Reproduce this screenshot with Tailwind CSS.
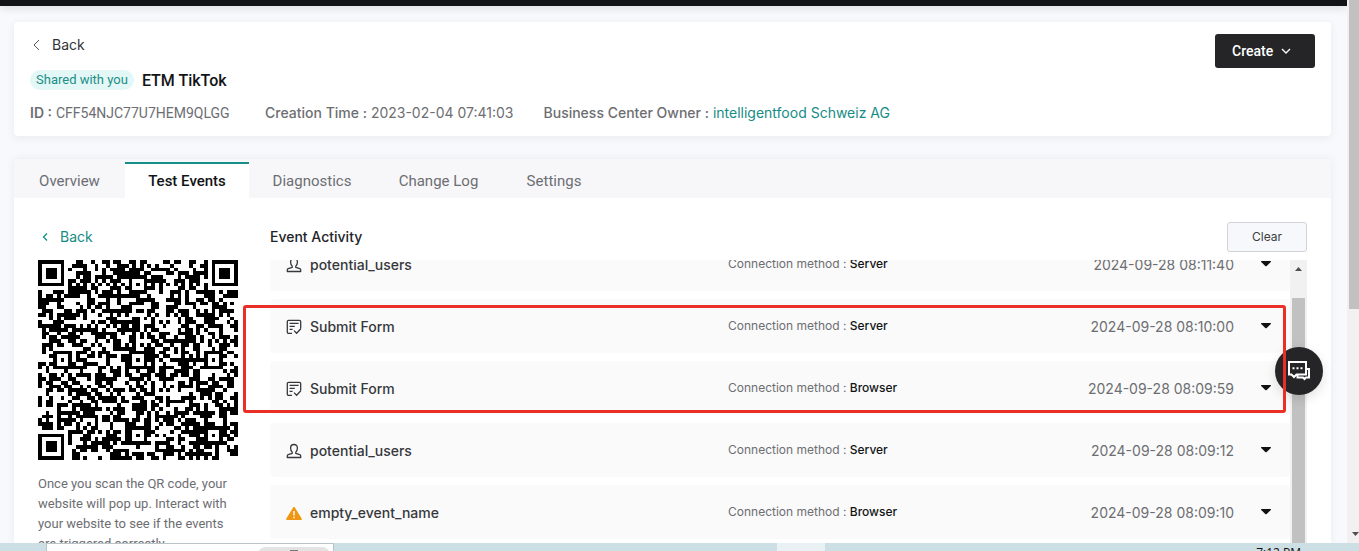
<!DOCTYPE html>
<html lang="en">
<head>
<meta charset="utf-8">
<meta name="viewport" content="width=device-width, initial-scale=1">
<title>Event Manager - Test Events</title>
<script src="https://cdn.jsdelivr.net/npm/@tailwindcss/browser@4"></script>
</head>
<body class="relative flex h-screen flex-col overflow-hidden bg-[#f8f9fc] font-['Inter','Liberation_Sans',sans-serif] text-sm text-[#6d6e72]">
<svg class="hidden">
  <symbol id="user" viewBox="0 0 16 16" fill="none" stroke="currentColor" stroke-width="1.3" stroke-linejoin="round"><path d="M8 1.500C5.900 1.500 4.600 3 4.600 5c0 1.800.7 3.200 1.600 4.100v1.300L2.200 11.700c-.6.2-.9.7-.9 1.300v1.500h13.400V13c0-.6-.3-1.100-.9-1.300l-4-1.300V9.100C10.700 8.200 11.400 6.800 11.400 5c0-2-1.300-3.500-3.400-3.500z"/></symbol>
  <symbol id="form" viewBox="0 0 16 16" fill="none" stroke="currentColor" stroke-width="1.300"><path d="M6 14.400H2.600a1.300 1.300 0 0 1-1.300-1.300V2.600a1.300 1.300 0 0 1 1.300-1.300h10.800a1.300 1.300 0 0 1 1.300 1.300v6.800M3.600 4.300h9M3.600 7.300h5.200M3.600 10.300h3M8 11.600l2.600 2.600 4.200-4.400"/></symbol>
  <symbol id="warn" viewBox="0 0 16 16"><path d="M7.300 2.200a.8.8 0 0 1 1.400 0l7.100 11.500a.8.800 0 0 1-.7 1.200H.9a.8.800 0 0 1-.7-1.200z" fill="#ef9613"/><path d="M8 6v4.500M8 11.700v1.500" stroke="#fff" stroke-width="1.400"/></symbol>
  <symbol id="caret" viewBox="0 0 10 6"><path d="M.5 0h9q.8.2.3 1L5.700 5q-.7.600-1.400 0L.2 1Q-.3.200.5 0z" fill="#111"/></symbol>
</svg>

<div class="flex min-h-0 flex-1">
  <main class="flex min-w-0 flex-1 flex-col overflow-hidden">
    <div class="h-1.5 shrink-0 bg-[#121316] shadow-[0_2px_8px_rgba(0,0,0,0.14)]"></div>

    <header class="mt-4 mr-4 ml-3.5 flex shrink-0 items-start justify-between rounded-sm bg-white px-4 py-3 shadow-[0_2px_8px_rgba(30,60,90,0.08)]">
      <div>
        <a href="#" class="flex h-[22px] items-center gap-3 text-[#323438]"><svg class="ml-0.5 h-3 w-2" viewBox="0 0 8 12" fill="none" stroke="#55575b"><path d="M7 1 2 6l5 5"/></svg>Back</a>
        <div class="mt-3 flex h-[26px] items-center gap-2 font-['Roboto',sans-serif]">
          <span class="mb-0.5 h-5 rounded-full bg-[#e3f8f6] px-1.5 text-[13px] leading-5 text-[#1b8e86]">Shared with you</span>
          <h1 class="text-base font-medium text-[#121416]">ETM TikTok</h1>
        </div>
        <div class="mt-2 flex h-[22px] items-center gap-[30px]">
          <span class="min-w-[205px]"><b class="font-semibold">ID :</b> <span class="font-['Roboto',sans-serif]">CFF54NJC77U7HEM9QLGG</span></span>
          <span><b class="font-medium">Creation Time :</b> 2023-02-04 07:41:03</span>
          <span><b class="font-medium">Business Center Owner :</b> <a href="#" class="text-[#158c85]">intelligentfood Schweiz AG</a></span>
        </div>
      </div>
      <button class="flex h-[34px] w-[100px] items-center gap-2 rounded-[3px] bg-[#252527] pl-[17px] font-['Roboto',sans-serif] font-medium text-white">Create<svg class="h-2 w-2.5" viewBox="0 0 10 8" fill="none" stroke="white" stroke-width="1.300"><path d="m1 2 4 4 4-4"/></svg></button>
    </header>

    <section class="mt-[23px] mr-4 ml-3.5 flex min-h-0 flex-1 flex-col bg-white shadow-[0_0_8px_rgba(30,60,90,0.08)]">
      <nav class="flex h-[39px] shrink-0 bg-[#f7f7fa] pt-[3px] text-center font-['Roboto',sans-serif] text-[15px]">
        <a href="#" class="w-[111px] pt-2 leading-[22px]">Overview</a>
        <a href="#" aria-current="page" class="w-[124px] border-t-2 border-[#168f8b] bg-white pt-1.5 leading-[22px] font-medium text-[#121416]">Test Events</a>
        <a href="#" class="w-[126px] pt-2 leading-[22px]">Diagnostics</a>
        <a href="#" class="w-[127px] pt-2 leading-[22px]">Change Log</a>
        <a href="#" class="w-[104px] pt-2 leading-[22px]">Settings</a>
      </nav>
      <div class="flex min-h-0 flex-1 gap-8 overflow-hidden pt-6 pr-6 pl-6">
        <aside class="w-[200px] shrink-0">
          <a href="#" class="flex h-[30px] items-center gap-3 text-[#158c85]"><svg class="ml-1 h-2 w-1.5" viewBox="0 0 6 8" fill="none" stroke="currentColor" stroke-width="1.300"><path d="M5 .5 1.500 4 5 7.500"/></svg>Back</a>
          <svg id="qr" class="mt-2 size-[200px]" viewBox="0 0 53 53" shape-rendering="crispEdges" role="img" aria-label="QR code"></svg>
          <p class="mt-3.5 font-['Roboto',sans-serif] text-[13px] leading-5">Once you scan the QR code, your website will pop up. Interact with your website to see if the events are triggered correctly.</p>
        </aside>
        <div class="flex min-w-0 flex-1 flex-col">
          <div class="flex h-[30px] shrink-0 items-center justify-between">
            <h2 class="font-medium text-[#222428]">Event Activity</h2>
            <button class="h-[30px] w-20 rounded-[3px] border border-[#d2d3d6] bg-[#f7f8fb] text-xs text-[#3c3e42]">Clear</button>
          </div>
          <div class="mt-2 flex min-h-0 flex-1 overflow-hidden">
            <ul class="-mt-[23px] flex flex-1 flex-col gap-2">
              <li class="grid h-[54px] shrink-0 grid-cols-[458px_1fr_auto_auto] items-center rounded-sm bg-[#fafafa] pr-[19px]">
                <span class="flex items-center gap-2 pt-0.5 pl-4 font-medium text-[#36383c]"><svg class="size-4"><use href="#user"/></svg>potential_users</span>
                <span class="text-xs">Connection method : <b class="font-medium text-[#121416]">Server</b></span>
                <time class="pt-0.5">2024-09-28 08:11:40</time><button aria-label="Expand" class="ml-[27px]"><svg class="h-1.5 w-2.5"><use href="#caret"/></svg></button>
              </li>
              <li class="grid h-[54px] shrink-0 grid-cols-[458px_1fr_auto_auto] items-center rounded-sm bg-[#fafafa] pr-[19px]">
                <span class="flex items-center gap-2 pt-0.5 pl-4 font-medium text-[#36383c]"><svg class="size-4"><use href="#form"/></svg>Submit Form</span>
                <span class="text-xs">Connection method : <b class="font-medium text-[#121416]">Server</b></span>
                <time class="pt-0.5">2024-09-28 08:10:00</time><button aria-label="Expand" class="ml-[27px]"><svg class="h-1.5 w-2.5"><use href="#caret"/></svg></button>
              </li>
              <li class="grid h-[54px] shrink-0 grid-cols-[458px_1fr_auto_auto] items-center rounded-sm bg-[#fafafa] pr-[19px]">
                <span class="flex items-center gap-2 pt-0.5 pl-4 font-medium text-[#36383c]"><svg class="size-4"><use href="#form"/></svg>Submit Form</span>
                <span class="text-xs">Connection method : <b class="font-medium text-[#121416]">Browser</b></span>
                <time class="pt-0.5">2024-09-28 08:09:59</time><button aria-label="Expand" class="ml-[27px]"><svg class="h-1.5 w-2.5"><use href="#caret"/></svg></button>
              </li>
              <li class="grid h-[54px] shrink-0 grid-cols-[458px_1fr_auto_auto] items-center rounded-sm bg-[#fafafa] pr-[19px]">
                <span class="flex items-center gap-2 pt-0.5 pl-4 font-medium text-[#36383c]"><svg class="size-4"><use href="#user"/></svg>potential_users</span>
                <span class="text-xs">Connection method : <b class="font-medium text-[#121416]">Server</b></span>
                <time class="pt-0.5">2024-09-28 08:09:12</time><button aria-label="Expand" class="ml-[27px]"><svg class="h-1.5 w-2.5"><use href="#caret"/></svg></button>
              </li>
              <li class="grid h-[54px] shrink-0 grid-cols-[458px_1fr_auto_auto] items-center rounded-sm bg-[#fafafa] pr-[19px]">
                <span class="flex items-center gap-2 pt-0.5 pl-4 font-medium text-[#36383c]"><svg class="size-4"><use href="#warn"/></svg>empty_event_name</span>
                <span class="text-xs">Connection method : <b class="font-medium text-[#121416]">Browser</b></span>
                <time class="pt-0.5">2024-09-28 08:09:10</time><button aria-label="Expand" class="ml-[27px]"><svg class="h-1.5 w-2.5"><use href="#caret"/></svg></button>
              </li>
            </ul>
            <div class="flex w-[17px] flex-col items-center bg-[#f1f1f1]">
              <svg class="mt-[7px] h-1 w-[7px] shrink-0" viewBox="0 0 7 4"><path d="M0 4h7L3.500 0z" fill="#505050"/></svg>
              <div class="mt-[27px] w-[13px] flex-1 bg-[#c1c1c1]"></div>
            </div>
          </div>
        </div>
      </div>
    </section>
  </main>
  <div class="flex w-3 shrink-0 flex-col justify-between bg-[#f1f1f1] pl-0.5">
    <div class="h-[309px] bg-[#c1c1c1]"></div>
    <svg class="mb-[7px] ml-[3px] h-1 w-[7px]" viewBox="0 0 7 4"><path d="M0 0h7L3.500 4z" fill="#505050"/></svg>
  </div>
</div>

<footer class="flex h-2 shrink-0 items-start overflow-hidden bg-[#cbdfe4] pl-[46px]">
  <div class="flex h-2 w-[288px] justify-end border border-b-0 border-[#b9c4c8] bg-white pt-[3px] pr-[3px]"><div class="flex h-5 w-[72px] justify-center rounded-lg bg-[#e3e3e4] pt-[3px]"><span class="h-1 w-2 bg-[#77797b]"></span></div></div>
  <div class="ml-[443px] h-2 w-12 bg-[#e9f1f4]"></div>
  <time class="mt-1 mr-[58px] ml-auto font-['Open_Sans',sans-serif] text-xs leading-3 text-[#111]">7:12 PM</time>
</footer>

<button aria-label="Chat" class="absolute top-[347px] right-9 flex size-12 items-center justify-center rounded-full bg-[#252527] shadow-[0_4px_12px_rgba(0,0,0,0.12)]">
  <svg class="h-5 w-[22px]" viewBox="0 0 22 20" fill="none" stroke="white" stroke-width="2"><path d="M1 1h17v12.500H8.500L6 16l-2.500-2.500H1z"/><path d="M18 8h3v8.500h-3L16.500 18 15 16.500H9.500v-3"/><path d="M4.500 7.300h2M8.500 7.300h2M12.500 7.300h2"/></svg>
</button>
<div class="pointer-events-none absolute top-[305px] right-[73px] left-[243px] h-[108px] rounded-[3px] border-3 border-[#ea2f27]"></div>

<script>
// Builds a version 9 symbol: finder, timing and alignment patterns around the data modules.
const N = 53;
let seed = 91573;
const rnd = () => (seed = (seed * 1103515245 + 12345) % 2147483648) / 2147483648;
const grid = Array.from({ length: N }, () => Array.from({ length: N }, () => rnd() < 0.52));
for (let i = 8; i < N - 8; i++) grid[6][i] = grid[i][6] = i % 2 === 0;
const square = (cx, cy, r, dark) => {
  for (let y = -r; y <= r; y++) for (let x = -r; x <= r; x++) {
    if (grid[cy + y] && cx + x >= 0 && cx + x < N) grid[cy + y][cx + x] = dark(Math.max(Math.abs(x), Math.abs(y)));
  }
};
[[3, 3], [49, 3], [3, 49]].forEach(([x, y]) => square(x, y, 4, d => d < 2 || d === 3));
[[26, 6], [6, 26], [26, 26], [46, 26], [26, 46], [46, 46]].forEach(([x, y]) => square(x, y, 2, d => d !== 1));
let d = '';
grid.forEach((row, y) => row.forEach((on, x) => { if (on) d += `M${x} ${y}h1v1h-1z`; }));
document.getElementById('qr').innerHTML = `<path d="${d}"/>`;
</script>
</body>
</html>
